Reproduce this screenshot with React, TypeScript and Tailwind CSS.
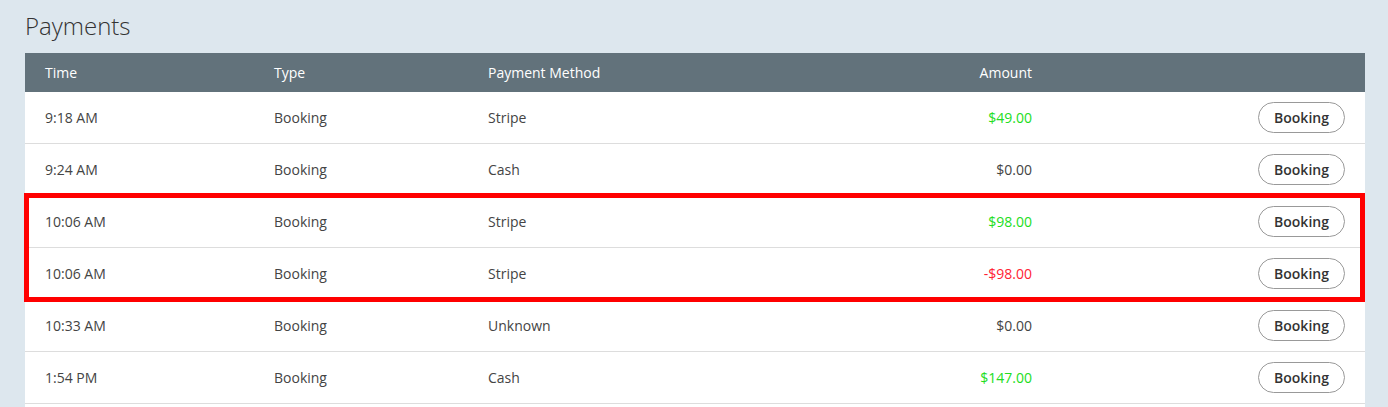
import React from "react";

const rows = [
  { t: "9:18 AM", m: "Stripe", a: "$49.00", c: "text-[#22dd22]" },
  { t: "9:24 AM", m: "Cash", a: "$0.00", c: "text-[#444]" },
  { t: "10:06 AM", m: "Stripe", a: "$98.00", c: "text-[#22dd22]" },
  { t: "10:06 AM", m: "Stripe", a: "-$98.00", c: "text-[#ff2233]" },
  { t: "10:33 AM", m: "Unknown", a: "$0.00", c: "text-[#444]" },
  { t: "1:54 PM", m: "Cash", a: "$147.00", c: "text-[#22dd22]" },
];

function Row({ r }: { r: (typeof rows)[number] }) {
  return (
    <div className="flex h-[52px] items-center border-b border-[#dddddd] bg-white text-[14px] text-[#444]">
      <div className="w-[229px] pl-5">{r.t}</div>
      <div className="w-[214px] pl-5">Booking</div>
      <div className="w-[544px] pl-5">{r.m}</div>
      <div className="w-[20px] flex-none" />
      <div className={`flex w-0 justify-end whitespace-nowrap ${r.c}`}>{r.a}</div>
      <div className="flex flex-1 justify-end pr-5">
        <button className="h-[31px] w-[87px] rounded-full border border-[#999] bg-white text-[14px] font-semibold text-[#333]">
          Booking
        </button>
      </div>
    </div>
  );
}

export default function App() {
  return (
    <div className="h-[407px] overflow-hidden bg-[#dde7ee] pl-[25px] pr-[23px] pt-[10px]" style={{ fontFamily: '"Open Sans", sans-serif' }}>
      <h1 className="mb-[12px] h-[31px] text-[24px] font-light leading-[31px] text-[#333]">Payments</h1>
      <div className="flex h-[39px] items-center bg-[#62727b] text-[14px] text-white">
        <div className="w-[229px] pl-5">Time</div>
        <div className="w-[214px] pl-5">Type</div>
        <div className="w-[544px] pl-5">Payment Method</div>
        <div className="w-[20px]" />
        <div className="flex w-0 justify-end whitespace-nowrap">Amount</div>
      </div>
      <Row r={rows[0]} />
      <Row r={rows[1]} />
      <div className="relative">
        <Row r={rows[2]} />
        <Row r={rows[3]} />
        <div className="pointer-events-none absolute -top-[3px] -bottom-[2px] -left-[1px] right-0 border-[5px] border-[#ff0000]" />
      </div>
      <Row r={rows[4]} />
      <Row r={rows[5]} />
      <div className="h-[20px] bg-white" />
    </div>
  );
}
